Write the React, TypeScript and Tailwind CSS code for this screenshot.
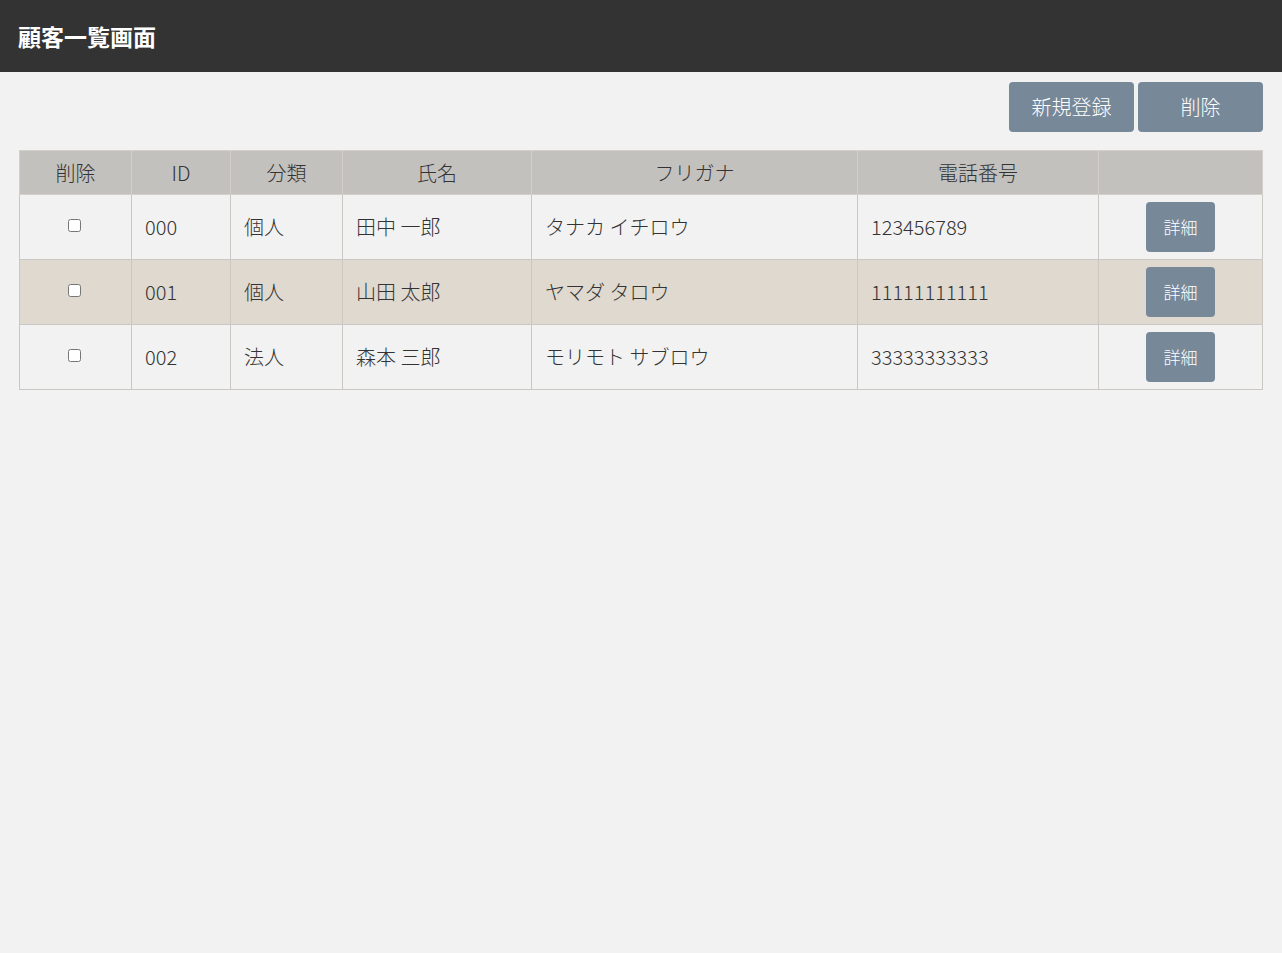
import React from "react";

type Customer = {
  id: string;
  kind: string;
  name: string;
  kana: string;
  tel: string;
};

const customers: Customer[] = [
  { id: "000", kind: "個人", name: "田中 一郎", kana: "タナカ イチロウ", tel: "123456789" },
  { id: "001", kind: "個人", name: "山田 太郎", kana: "ヤマダ タロウ", tel: "11111111111" },
  { id: "002", kind: "法人", name: "森本 三郎", kana: "モリモト サブロウ", tel: "33333333333" },
];

const headers = ["削除", "ID", "分類", "氏名", "フリガナ", "電話番号", ""];
const widths = ["w-[112px]", "w-[99px]", "w-[112px]", "w-[189px]", "w-[326px]", "w-[241px]", "w-[164px]"];

export default function App() {
  return (
    <div className="min-h-[953px] bg-[#f2f2f2] text-[#333] font-['Noto_Sans_CJK_JP',sans-serif] font-light">
      <header className="h-[72px] bg-[#333333] flex items-center px-[18px]">
        <h1 className="text-white text-[23px] font-bold">顧客一覧画面</h1>
      </header>
      <main className="px-[19px] pt-[10px]">
        <div className="flex justify-end gap-[4px]">
          <button className="w-[125px] h-[50px] rounded bg-[#778899] text-white text-[20px]">新規登録</button>
          <button className="w-[125px] h-[50px] rounded bg-[#778899] text-white text-[20px]">削除</button>
        </div>
        <table className="mt-[18px] w-full table-fixed border-collapse border border-[#cbc8c4] text-[20px]">
          <colgroup>
            {widths.map((w, i) => (
              <col key={i} className={w} />
            ))}
          </colgroup>
          <thead>
            <tr className="bg-[#c3c1be] h-[44px]">
              {headers.map((h, i) => (
                <th key={i} className="border border-[#d3d0cc] font-light text-center pt-[1px]">
                  {h}
                </th>
              ))}
            </tr>
          </thead>
          <tbody>
            {customers.map((c, i) => (
              <tr key={c.id} className={`h-[65px] ${i % 2 === 1 ? "bg-[#dfd9cf]" : "bg-[#f2f2f2]"}`}>
                <td className="border border-[#cbc8c4] text-center">
                  <input type="checkbox" className="w-[13px] h-[13px] align-middle -mt-[8px] -ml-[2px]" />
                </td>
                <td className="border border-[#cbc8c4] px-[13px]">{c.id}</td>
                <td className="border border-[#cbc8c4] px-[13px]">{c.kind}</td>
                <td className="border border-[#cbc8c4] px-[13px]">{c.name}</td>
                <td className="border border-[#cbc8c4] px-[13px]">{c.kana}</td>
                <td className="border border-[#cbc8c4] px-[13px]">{c.tel}</td>
                <td className="border border-[#cbc8c4] text-center">
                  <button className="w-[69px] h-[50px] rounded bg-[#778899] text-white text-[17px]">詳細</button>
                </td>
              </tr>
            ))}
          </tbody>
        </table>
      </main>
    </div>
  );
}
